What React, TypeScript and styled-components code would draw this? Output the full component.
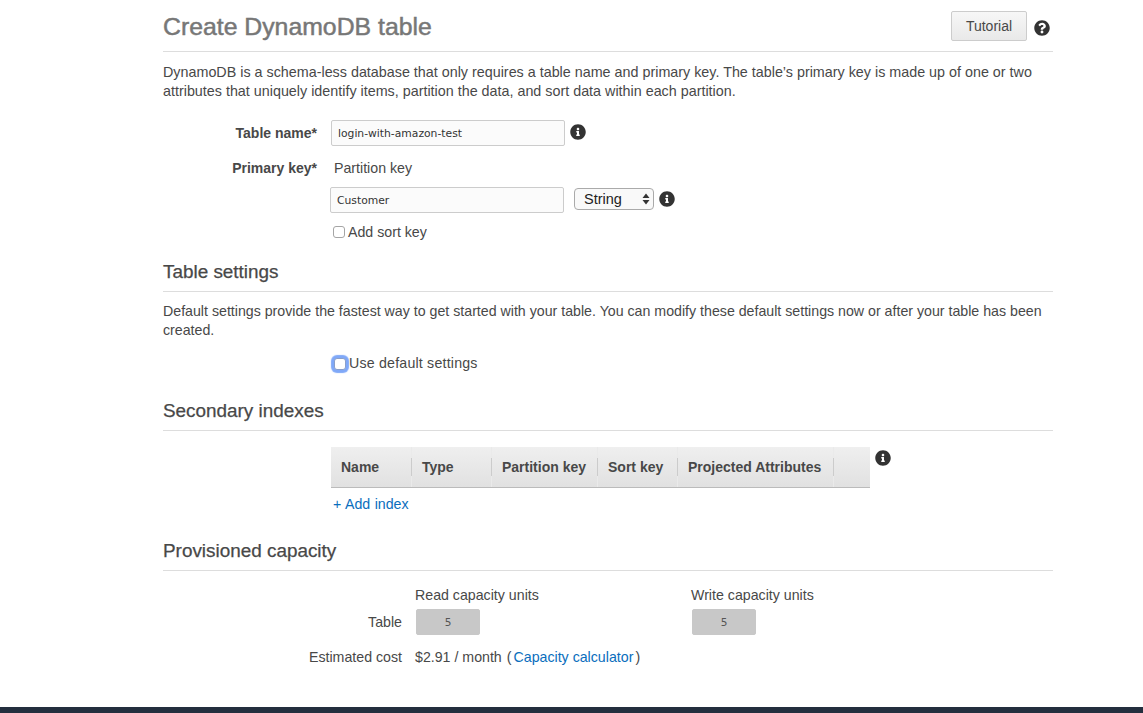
import React from 'react';
import styled, { createGlobalStyle } from 'styled-components';
import { FaInfoCircle, FaQuestionCircle } from 'react-icons/fa';

const GlobalStyle = createGlobalStyle`
  html, body {
    margin: 0;
    padding: 0;
    height: 100%;
    overflow: hidden;
    background: #fff;
    font-family: "Liberation Sans", Arial, sans-serif;
    color: #484848;
  }
`;

const Page = styled.div`
  height: 713px;
  display: flex;
  flex-direction: column;
`;

const Main = styled.main`
  flex: 1;
  width: 890px;
  margin-left: 163px;
`;

const Footer = styled.footer`
  height: 6px;
  background: #232f3e;
`;

const TitleBar = styled.div`
  height: 51px;
  display: flex;
  align-items: flex-start;
  border-bottom: 1px solid #ddd;
`;

const Title = styled.h1`
  flex: 1;
  margin: 12px 0 0;
  font-size: 24.8px;
  line-height: 30px;
  font-weight: 400;
  color: #777;
  -webkit-text-stroke: 0.5px #777;
`;

const TutorialButton = styled.button`
  width: 76px;
  height: 30px;
  margin-top: 11px;
  padding: 0;
  border: 1px solid #ccc;
  border-radius: 2px;
  background: linear-gradient(#f7f7f7, #e9e9e9);
  font: 14px "Liberation Sans", Arial, sans-serif;
  color: #484848;
`;

const HelpIcon = styled(FaQuestionCircle)`
  margin: 20px 3px 0 7px;
  color: #333;
`;

const InfoIcon = styled(FaInfoCircle)`
  margin-bottom: 2px;
  color: #333;
  flex: none;
`;

const Paragraph = styled.p<{ $top: number; $leading: number; $size: number }>`
  margin: ${(p) => p.$top}px 0 0;
  font-size: ${(p) => p.$size}px;
  line-height: ${(p) => p.$leading}px;
  color: #484848;
`;

const FormRow = styled.div<{ $top: number; $h: number }>`
  display: flex;
  align-items: center;
  height: ${(p) => p.$h}px;
  margin-top: ${(p) => p.$top}px;
`;

const Label = styled.label`
  width: 154px;
  text-align: right;
  font-size: 14px;
  font-weight: 700;
  color: #484848;
`;

const Indented = styled.div<{ $left: number }>`
  display: flex;
  align-items: center;
  margin-left: ${(p) => p.$left}px;
  font-size: 14.2px;
  color: #484848;
`;

const TextInput = styled.input`
  box-sizing: border-box;
  width: 234px;
  height: 26px;
  padding: 0 6px;
  border: 1px solid #ccc;
  border-radius: 2px;
  background: #fbfbfb;
  font: 10.75px "DejaVu Sans", Verdana, sans-serif;
  color: #333;
  outline: none;
`;

const Select = styled.div`
  box-sizing: border-box;
  width: 80px;
  height: 22px;
  margin: 0 0 2px 10px;
  padding-left: 9px;
  display: flex;
  align-items: center;
  justify-content: space-between;
  border: 1px solid #aaa;
  border-radius: 4px;
  background: #f9f9f9;
  font-size: 14.5px;
  color: #222;
`;

const Caret = styled.svg`
  margin-right: 3px;
`;

const CheckBox = styled.span<{ $focused?: boolean }>`
  box-sizing: border-box;
  display: inline-block;
  flex: none;
  width: 12px;
  height: 12px;
  border: 1px solid #a5a5a5;
  border-radius: 3px;
  background: #fff;
  ${(p) => (p.$focused ? 'margin-top: 2px; border-color: #8a9fc9; box-shadow: 0 0 1px 3px #7fa8f8;' : '')}
`;

const CheckText = styled.span<{ $spaced?: boolean }>`
  margin-left: 3px;
  letter-spacing: ${(p) => (p.$spaced ? '0.2px' : 'normal')};
`;

const SectionTitle = styled.h2<{ $top: number }>`
  margin: ${(p) => p.$top}px 0 0;
  height: 29px;
  font-size: 18.9px;
  line-height: 20px;
  font-weight: 400;
  color: #484848;
  border-bottom: 1px solid #ddd;
  -webkit-text-stroke: 0.25px #484848;
`;

const TableWrap = styled.div`
  display: flex;
  align-items: flex-start;
  margin: 16px 0 0 168px;
`;

const IndexTable = styled.div`
  display: flex;
  width: 539px;
  height: 40px;
  border-bottom: 1px solid #bbb;
  background: linear-gradient(#efefef, #e1e1e1);
`;

const HeadCell = styled.div<{ $w: number }>`
  position: relative;
  box-sizing: border-box;
  width: ${(p) => p.$w}px;
  padding-left: 10px;
  border-right: 1px solid #eaeaea;
  font-size: 14px;
  font-weight: 700;
  line-height: 40px;
  color: #484848;
  white-space: nowrap;

  &::after {
    content: '';
    position: absolute;
    right: -1px;
    top: 11px;
    height: 18px;
    width: 1px;
    background: #ccc;
  }
`;

const TableInfo = styled(InfoIcon)`
  margin: 3px 0 0 5px;
`;

const BlueLink = styled.a`
  color: #0a6ebd;
  text-decoration: none;
`;

const AddLink = styled(BlueLink)`
  word-spacing: 0.5px;
`;

const CalculatorLink = styled(BlueLink)`
  margin: 0 2px;
`;

const Parens = styled.span`
  margin-left: 5px;
`;

const CapacityGrid = styled.div`
  display: grid;
  grid-template-columns: 252px 276px 1fr;
  grid-template-rows: 17px 28px 32px;
  row-gap: 5px;
  margin-top: 15px;
  font-size: 14.2px;
  color: #484848;
  align-items: center;
`;

const RowLabel = styled.div`
  padding-right: 13px;
  text-align: right;
`;

const DisabledBox = styled.div`
  box-sizing: border-box;
  width: 64px;
  height: 26px;
  margin-left: 1px;
  display: flex;
  align-items: center;
  justify-content: center;
  border: 1px solid #c8c8c8;
  border-radius: 2px;
  background: #c8c8c8;
  font: 10.5px "DejaVu Sans", Verdana, sans-serif;
  color: #555;
`;

const Cost = styled.div`
  grid-column: 2 / 4;
  white-space: nowrap;
`;

const columns: [string, number][] = [
  ['Name', 81],
  ['Type', 80],
  ['Partition key', 106],
  ['Sort key', 80],
  ['Projected Attributes', 156],
];

export default function App() {
  return (
    <Page>
      <GlobalStyle />
      <Main>
        <TitleBar>
          <Title>Create DynamoDB table</Title>
          <TutorialButton>Tutorial</TutorialButton>
          <HelpIcon size={16} />
        </TitleBar>
        <Paragraph $top={11} $leading={18.5} $size={14.33}>
          DynamoDB is a schema-less database that only requires a table name and primary key. The table’s primary key is made up of one or two
          <br />
          attributes that uniquely identify items, partition the data, and sort data within each partition.
        </Paragraph>

        <FormRow $top={20} $h={26}>
          <Label>Table name*</Label>
          <Indented $left={14}>
            <TextInput defaultValue="login-with-amazon-test" />
          </Indented>
          <Indented $left={5}>
            <InfoIcon size={16} />
          </Indented>
        </FormRow>
        <FormRow $top={12} $h={20}>
          <Label>Primary key*</Label>
          <Indented $left={17}>Partition key</Indented>
        </FormRow>
        <FormRow $top={9} $h={26}>
          <Indented $left={167}>
            <TextInput defaultValue="Customer" />
            <Select>
              String
              <Caret width="8" height="12" viewBox="0 0 8 12">
                <path d="M4 0.5 L7.5 5 H0.5 Z M4 11.5 L0.5 7 H7.5 Z" fill="#333" />
              </Caret>
            </Select>
          </Indented>
          <Indented $left={5}>
            <InfoIcon size={16} />
          </Indented>
        </FormRow>
        <FormRow $top={9} $h={20}>
          <Indented $left={170}>
            <CheckBox />
            <CheckText>Add sort key</CheckText>
          </Indented>
        </FormRow>

        <SectionTitle $top={20}>Table settings</SectionTitle>
        <Paragraph $top={10} $leading={19} $size={14.2}>
          Default settings provide the fastest way to get started with your table. You can modify these default settings now or after your table has been created.
        </Paragraph>
        <FormRow $top={13} $h={20}>
          <Indented $left={171}>
            <CheckBox $focused />
            <CheckText $spaced>Use default settings</CheckText>
          </Indented>
        </FormRow>

        <SectionTitle $top={28}>Secondary indexes</SectionTitle>
        <TableWrap>
          <IndexTable>
            {columns.map(([name, w]) => (
              <HeadCell key={name} $w={w}>
                {name}
              </HeadCell>
            ))}
          </IndexTable>
          <TableInfo size={16} />
        </TableWrap>
        <FormRow $top={6} $h={20}>
          <Indented $left={170}>
            <AddLink href="#">+ Add index</AddLink>
          </Indented>
        </FormRow>

        <SectionTitle $top={27}>Provisioned capacity</SectionTitle>
        <CapacityGrid>
          <span />
          <span>Read capacity units</span>
          <span>Write capacity units</span>
          <RowLabel>Table</RowLabel>
          <DisabledBox>5</DisabledBox>
          <DisabledBox>5</DisabledBox>
          <RowLabel>Estimated cost</RowLabel>
          <Cost>
            $2.91 / month
            <Parens>
              (<CalculatorLink href="#">Capacity calculator</CalculatorLink>)
            </Parens>
          </Cost>
        </CapacityGrid>
      </Main>
      <Footer />
    </Page>
  );
}
